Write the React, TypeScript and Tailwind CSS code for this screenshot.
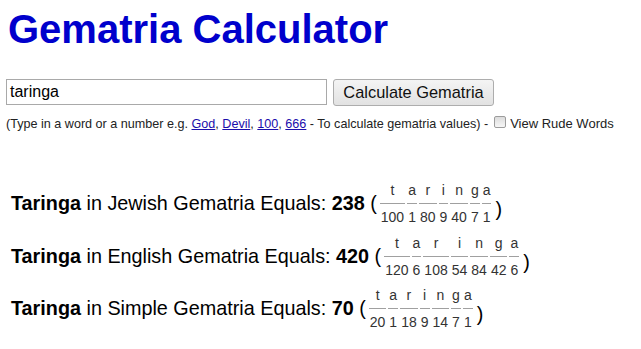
import React from 'react'

type Letter = { ch: string; val: number }

const rows: { name: string; total: number; letters: Letter[] }[] = [
  {
    name: 'Jewish',
    total: 238,
    letters: [
      { ch: 't', val: 100 },
      { ch: 'a', val: 1 },
      { ch: 'r', val: 80 },
      { ch: 'i', val: 9 },
      { ch: 'n', val: 40 },
      { ch: 'g', val: 7 },
      { ch: 'a', val: 1 },
    ],
  },
  {
    name: 'English',
    total: 420,
    letters: [
      { ch: 't', val: 120 },
      { ch: 'a', val: 6 },
      { ch: 'r', val: 108 },
      { ch: 'i', val: 54 },
      { ch: 'n', val: 84 },
      { ch: 'g', val: 42 },
      { ch: 'a', val: 6 },
    ],
  },
  {
    name: 'Simple',
    total: 70,
    letters: [
      { ch: 't', val: 20 },
      { ch: 'a', val: 1 },
      { ch: 'r', val: 18 },
      { ch: 'i', val: 9 },
      { ch: 'n', val: 14 },
      { ch: 'g', val: 7 },
      { ch: 'a', val: 1 },
    ],
  },
]

function Breakdown({ letters }: { letters: Letter[] }) {
  return (
    <div className="flex gap-[2px] mt-[3px] text-[14px] text-[#333]">
      {letters.map((l, i) => (
        <div key={i} className="flex flex-col items-stretch">
          <span className="text-center leading-[18px] pb-[4px]">{l.ch}</span>
          <span className="text-center leading-[16px] pt-[5px] px-[1px] border-t border-[#a0a0a0]">
            {l.val}
          </span>
        </div>
      ))}
    </div>
  )
}

export default function App() {
  return (
    <div className="w-[641px] h-[349px] overflow-hidden bg-white font-['Liberation_Sans',Arial,sans-serif] text-black">
      <h1 className="pt-[9px] pl-[8px] text-[40px] leading-[40px] font-bold text-[#0000cc]">
        Gematria Calculator
      </h1>

      <div className="flex gap-[6px] pl-[6px] mt-[30px] h-[27px]">
        <div className="w-[321px] h-[26px] border border-[#a9a9a9] flex items-center pl-[3px] text-[16px] text-black">
          taringa
        </div>
        <div className="w-[161px] h-[27px] border border-[#adadad] rounded-[3px] bg-gradient-to-b from-[#f4f4f4] to-[#e2e2e2] flex items-center justify-center text-[16.4px] text-[#111]">
          Calculate Gematria
        </div>
      </div>

      <div className="mt-[10px] pl-[6px] text-[12.6px] leading-[16px] text-[#222] flex items-end whitespace-nowrap">
        <span>
          (Type in a word or a number e.g.{' '}
          <a className="text-[#1a0dab] underline">God</a>,{' '}
          <a className="text-[#1a0dab] underline">Devil</a>,{' '}
          <a className="text-[#1a0dab] underline">100</a>,{' '}
          <a className="text-[#1a0dab] underline">666</a> - To calculate gematria values) -
        </span>
        <span className="inline-block w-[12px] h-[12px] ml-[6px] mr-[4px] mb-[4px] rounded-[2px] border border-[#9c9c9c] bg-gradient-to-b from-[#dcdcdc] to-[#f6f6f6]"></span>
        <span className="text-[13px]">View Rude Words</span>
      </div>

      <div className="mt-[46px]">
        {rows.map((r) => (
          <div key={r.name} className="flex items-start h-[52.5px] pl-[11px]">
            <div className="mt-[15px] text-[19.8px] leading-[20px] whitespace-nowrap">
              <b>Taringa</b> in {r.name} Gematria Equals: <b>{r.total}</b> (
            </div>
            <div className="ml-[3px]">
              <Breakdown letters={r.letters} />
            </div>
            <div className="mt-[21px] ml-[4px] text-[19.8px] leading-[20px]">)</div>
          </div>
        ))}
      </div>
    </div>
  )
}
